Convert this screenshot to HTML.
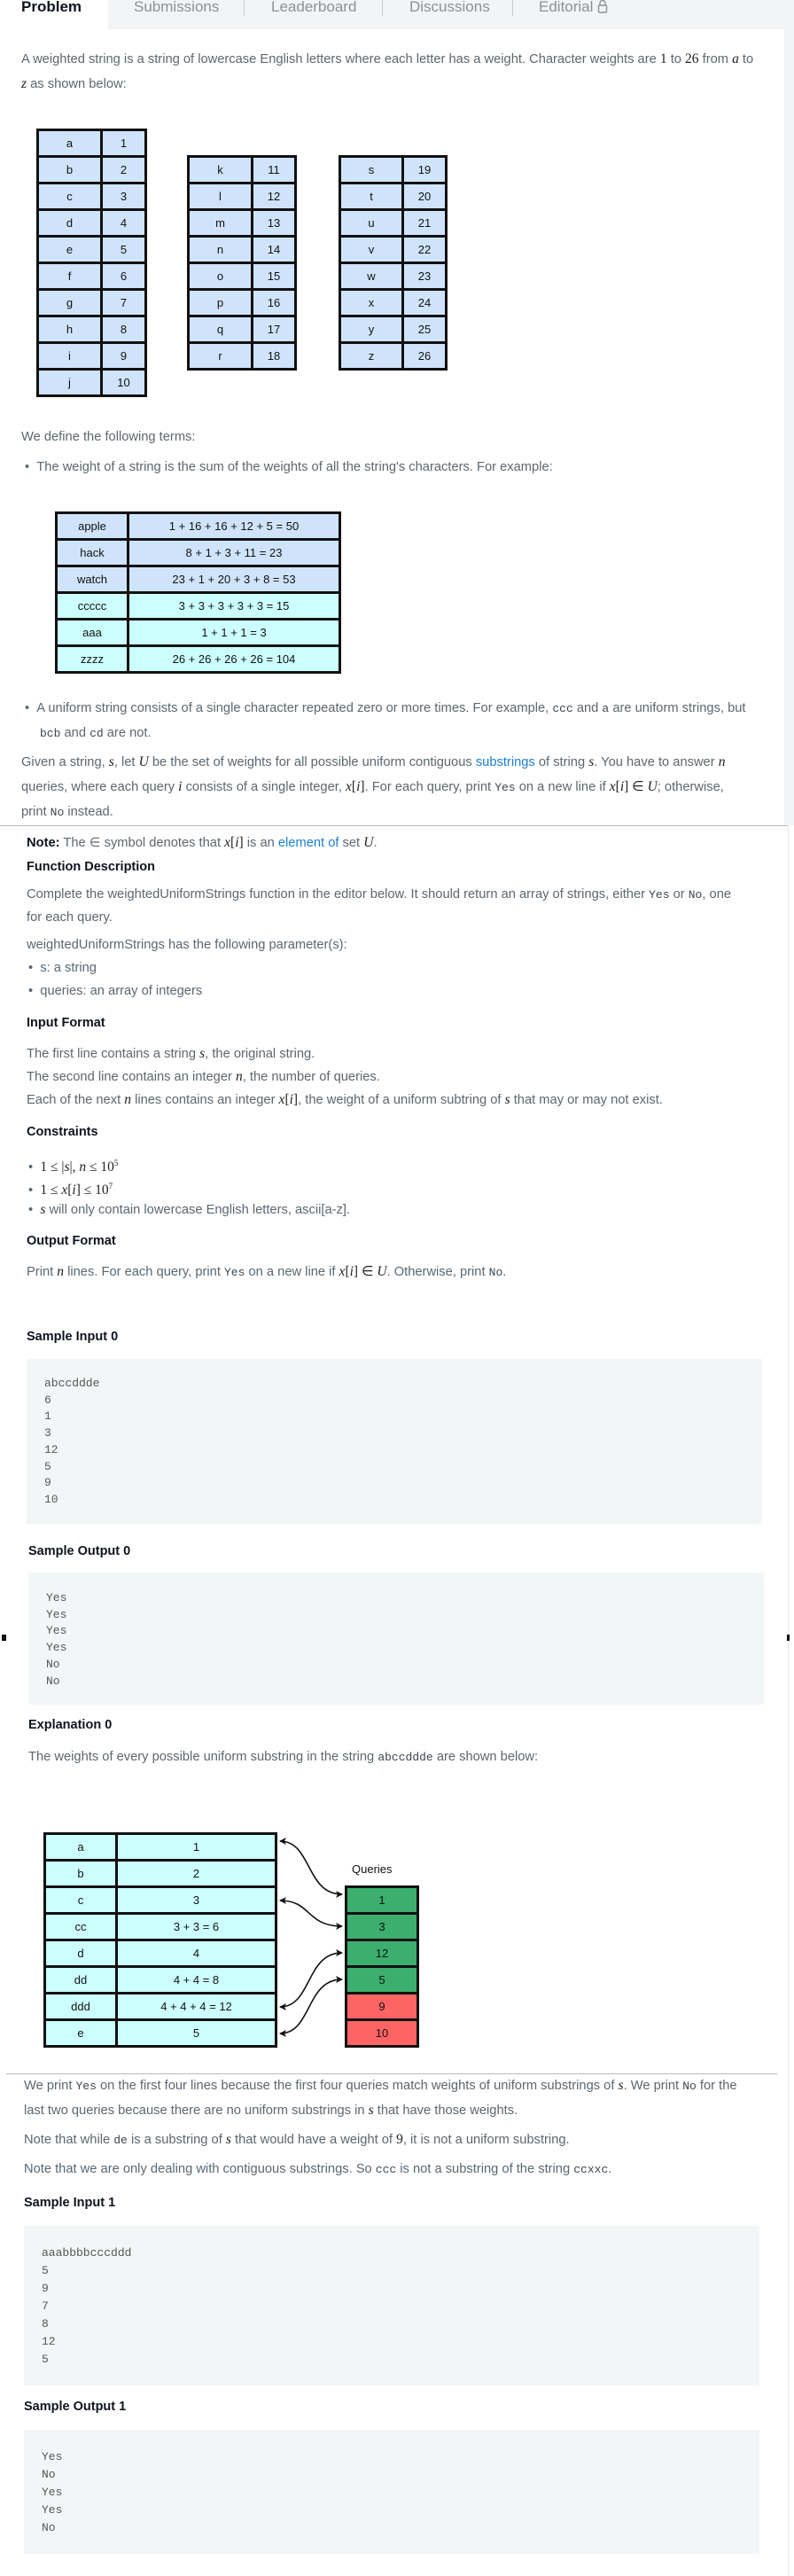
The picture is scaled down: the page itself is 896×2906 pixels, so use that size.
<!DOCTYPE html>
<html><head><meta charset="utf-8"><style>
*{margin:0;padding:0;box-sizing:border-box}
body{width:896px;height:2906px;position:relative;background:#fff;overflow:hidden;font-family:"Liberation Sans",sans-serif}
.t{position:absolute;white-space:nowrap;font-size:14.7px;line-height:20px;color:#5b6770}
.h{position:absolute;white-space:nowrap;font-size:14.5px;line-height:20px;color:#0e141e;font-weight:bold}
.m{font-family:"Liberation Serif",serif;font-style:italic;color:#222;font-size:15.5px}
.n{font-family:"Liberation Serif",serif;color:#222;font-size:15.5px}
.c{font-family:"Liberation Mono",monospace;font-size:13px;color:#3b4650}
a{color:#1b7fcc;text-decoration:none}
.tab{position:absolute;top:-3px;font-size:17px;color:#8a9299;line-height:22px}
.sep{position:absolute;top:0;width:1px;height:18px;background:#c8ced3}
table{position:absolute;border-collapse:collapse}
td{border:3px solid #111;text-align:center;font-size:13px;color:#111;padding:0;height:30px}
.b td{background:#cfe4fb}
.cy td{background:#ccffff}
.box{position:absolute;background:#f3f6f7}
.code{position:absolute;font-family:"Liberation Mono",monospace;font-size:13px;color:#555;white-space:pre}
</style></head><body>
<div style="position:absolute;left:122px;top:0;width:774px;height:33px;background:#f2f4f5"></div>
<div style="position:absolute;left:885px;top:33px;width:11px;height:898px;background:#f2f4f5"></div>
<div class="tab" style="left:24px;color:#0e141e;font-weight:bold;font-size:17px">Problem</div>
<div class="tab" style="left:151px">Submissions</div>
<div class="sep" style="left:275px"></div>
<div class="tab" style="left:306px">Leaderboard</div>
<div class="sep" style="left:431px"></div>
<div class="tab" style="left:462px">Discussions</div>
<div class="sep" style="left:578px"></div>
<div class="tab" style="left:608px">Editorial <svg width="12" height="16" viewBox="0 0 12 16" style="vertical-align:-2px"><path d="M3 7V4.5a3 3 0 0 1 6 0V7" fill="none" stroke="#8a9299" stroke-width="1.4"/><rect x="1.5" y="7" width="9" height="8" rx="1" fill="none" stroke="#8a9299" stroke-width="1.4"/></svg></div>

<div class="t" style="left:24px;top:57px">A weighted string is a string of lowercase English letters where each letter has a weight. Character weights are <span class="n">1</span> to <span class="n">26</span> from <span class="m">a</span> to</div>
<div class="t" style="left:24px;top:85px"><span class="m">z</span> as shown below:</div>

<table class="b" style="left:41px;top:145px;width:125px">
<tr><td style="width:72px">a</td><td>1</td></tr><tr><td>b</td><td>2</td></tr><tr><td>c</td><td>3</td></tr><tr><td>d</td><td>4</td></tr><tr><td>e</td><td>5</td></tr><tr><td>f</td><td>6</td></tr><tr><td>g</td><td>7</td></tr><tr><td>h</td><td>8</td></tr><tr><td>i</td><td>9</td></tr><tr><td>j</td><td>10</td></tr></table>
<table class="b" style="left:211px;top:175px;width:124px">
<tr><td style="width:72px">k</td><td>11</td></tr><tr><td>l</td><td>12</td></tr><tr><td>m</td><td>13</td></tr><tr><td>n</td><td>14</td></tr><tr><td>o</td><td>15</td></tr><tr><td>p</td><td>16</td></tr><tr><td>q</td><td>17</td></tr><tr><td>r</td><td>18</td></tr></table>
<table class="b" style="left:382px;top:175px;width:123px">
<tr><td style="width:71px">s</td><td>19</td></tr><tr><td>t</td><td>20</td></tr><tr><td>u</td><td>21</td></tr><tr><td>v</td><td>22</td></tr><tr><td>w</td><td>23</td></tr><tr><td>x</td><td>24</td></tr><tr><td>y</td><td>25</td></tr><tr><td>z</td><td>26</td></tr></table>

<div class="t" style="left:24px;top:483px">We define the following terms:</div>
<div class="t" style="left:28px;top:517px">•&nbsp;&nbsp;The weight of a string is the sum of the weights of all the string's characters. For example:</div>

<table style="left:62px;top:577px;width:323px">
<tr class="b"><td style="width:81px">apple</td><td>1 + 16 + 16 + 12 + 5 = 50</td></tr>
<tr class="b"><td>hack</td><td>8 + 1 + 3 + 11 = 23</td></tr>
<tr class="b"><td>watch</td><td>23 + 1 + 20 + 3 + 8 = 53</td></tr>
<tr class="cy"><td>ccccc</td><td>3 + 3 + 3 + 3 + 3 = 15</td></tr>
<tr class="cy"><td>aaa</td><td>1 + 1 + 1 = 3</td></tr>
<tr class="cy"><td>zzzz</td><td>26 + 26 + 26 + 26 = 104</td></tr></table>

<div class="t" style="left:28px;top:789px">•&nbsp;&nbsp;A uniform string consists of a single character repeated zero or more times. For example, <span class="c">ccc</span> and <span class="c">a</span> are uniform strings, but</div>
<div class="t" style="left:45px;top:817px"><span class="c">bcb</span> and <span class="c">cd</span> are not.</div>
<div class="t" style="left:24px;top:850px">Given a string, <span class="m">s</span>, let <span class="m">U</span> be the set of weights for all possible uniform contiguous <a>substrings</a> of string <span class="m">s</span>. You have to answer <span class="m">n</span></div>
<div class="t" style="left:24px;top:878px">queries, where each query <span class="m">i</span> consists of a single integer, <span class="m">x</span><span class="n">[</span><span class="m">i</span><span class="n">]</span>. For each query, print <span class="c">Yes</span> on a new line if <span class="m">x</span><span class="n">[</span><span class="m">i</span><span class="n">] ∈ </span><span class="m">U</span>; otherwise,</div>
<div class="t" style="left:24px;top:906px">print <span class="c">No</span> instead.</div>
<div style="position:absolute;left:0;top:931px;width:890px;height:1px;background:#bbb"></div>
<div style="position:absolute;left:889px;top:931px;width:1px;height:1975px;background:#e4e6e8"></div>

<div class="t" style="left:30px;top:941px"><b style="color:#0e141e">Note:</b> The ∈ symbol denotes that <span class="m">x</span><span class="n">[</span><span class="m">i</span><span class="n">]</span> is an <a>element of</a> set <span class="m">U</span>.</div>
<div class="h" style="left:30px;top:968px">Function Description</div>
<div class="t" style="left:30px;top:999px">Complete the weightedUniformStrings function in the editor below. It should return an array of strings, either <span class="c">Yes</span> or <span class="c">No</span>, one</div>
<div class="t" style="left:30px;top:1025px">for each query.</div>
<div class="t" style="left:30px;top:1056px">weightedUniformStrings has the following parameter(s):</div>
<div class="t" style="left:32px;top:1082px">•&nbsp;&nbsp;s: a string</div>
<div class="t" style="left:32px;top:1108px">•&nbsp;&nbsp;queries: an array of integers</div>
<div class="h" style="left:30px;top:1144px">Input Format</div>
<div class="t" style="left:30px;top:1179px">The first line contains a string <span class="m">s</span>, the original string.</div>
<div class="t" style="left:30px;top:1205px">The second line contains an integer <span class="m">n</span>, the number of queries.</div>
<div class="t" style="left:30px;top:1231px">Each of the next <span class="m">n</span> lines contains an integer <span class="m">x</span><span class="n">[</span><span class="m">i</span><span class="n">]</span>, the weight of a uniform subtring of <span class="m">s</span> that may or may not exist.</div>
<div class="h" style="left:30px;top:1267px">Constraints</div>
<div class="t" style="left:32px;top:1302px">•&nbsp;&nbsp;<span class="n">1 ≤ |</span><span class="m">s</span><span class="n">|, </span><span class="m">n</span><span class="n"> ≤ 10<sup style="font-size:9px">5</sup></span></div>
<div class="t" style="left:32px;top:1328px">•&nbsp;&nbsp;<span class="n">1 ≤ </span><span class="m">x</span><span class="n">[</span><span class="m">i</span><span class="n">] ≤ 10<sup style="font-size:9px">7</sup></span></div>
<div class="t" style="left:32px;top:1355px">•&nbsp;&nbsp;<span class="m">s</span> will only contain lowercase English letters, ascii[a-z].</div>
<div class="h" style="left:30px;top:1390px">Output Format</div>
<div class="t" style="left:30px;top:1425px">Print <span class="m">n</span> lines. For each query, print <span class="c">Yes</span> on a new line if <span class="m">x</span><span class="n">[</span><span class="m">i</span><span class="n">] ∈ </span><span class="m">U</span>. Otherwise, print <span class="c">No</span>.</div>

<div class="h" style="left:30px;top:1498px">Sample Input 0</div>
<div class="box" style="left:30px;top:1533px;width:830px;height:186px"></div>
<div class="code" style="left:50px;top:1552px;line-height:18.7px">abccddde
6
1
3
12
5
9
10</div>
<div class="h" style="left:32px;top:1740px">Sample Output 0</div>
<div class="box" style="left:32px;top:1774px;width:830px;height:149px"></div>
<div class="code" style="left:52px;top:1794px;line-height:18.7px">Yes
Yes
Yes
Yes
No
No</div>
<div style="position:absolute;left:2px;top:1844px;width:5px;height:7px;background:#111"></div>
<div style="position:absolute;left:888px;top:1844px;width:3px;height:7px;background:#111"></div>
<div class="h" style="left:32px;top:1936px">Explanation 0</div>
<div class="t" style="left:32px;top:1972px">The weights of every possible uniform substring in the string <span class="c">abccddde</span> are shown below:</div>

<table class="cy" style="left:49px;top:2067px;width:264px">
<tr><td style="width:81px">a</td><td>1</td></tr><tr><td>b</td><td>2</td></tr><tr><td>c</td><td>3</td></tr><tr><td>cc</td><td>3 + 3 = 6</td></tr><tr><td>d</td><td>4</td></tr><tr><td>dd</td><td>4 + 4 = 8</td></tr><tr><td>ddd</td><td>4 + 4 + 4 = 12</td></tr><tr><td>e</td><td>5</td></tr></table>
<div style="position:absolute;left:397px;top:2101px;font-size:13px;color:#111">Queries</div>
<table style="left:389px;top:2127px;width:84px">
<tr><td style="background:#3caf6e">1</td></tr><tr><td style="background:#3caf6e">3</td></tr><tr><td style="background:#3caf6e">12</td></tr><tr><td style="background:#3caf6e">5</td></tr><tr><td style="background:#ff6464">9</td></tr><tr><td style="background:#ff6464">10</td></tr></table>
<svg style="position:absolute;left:0;top:0" width="896" height="2906">
<defs><marker id="ar" markerWidth="8" markerHeight="8" refX="7" refY="4" orient="auto-start-reverse" markerUnits="userSpaceOnUse"><path d="M0,0 L8,4 L0,8 L2,4 Z" fill="#111"/></marker></defs>
<g fill="none" stroke="#111" stroke-width="1.6" marker-start="url(#ar)" marker-end="url(#ar)">
<path d="M316,2077 C352,2077 345,2137 386,2137"/>
<path d="M316,2144 C352,2144 345,2173 386,2173"/>
<path d="M316,2264 C352,2264 345,2203 386,2203"/>
<path d="M316,2294 C352,2294 345,2233 386,2233"/>
</g></svg>

<div style="position:absolute;left:7px;top:2339px;width:870px;height:1px;background:#bbb"></div>
<div class="t" style="left:27px;top:2343px">We print <span class="c">Yes</span> on the first four lines because the first four queries match weights of uniform substrings of <span class="m">s</span>. We print <span class="c">No</span> for the</div>
<div class="t" style="left:27px;top:2371px">last two queries because there are no uniform substrings in <span class="m">s</span> that have those weights.</div>
<div class="t" style="left:27px;top:2404px">Note that while <span class="c">de</span> is a substring of <span class="m">s</span> that would have a weight of <span class="n">9</span>, it is not a uniform substring.</div>
<div class="t" style="left:27px;top:2437px">Note that we are only dealing with contiguous substrings. So <span class="c">ccc</span> is not a substring of the string <span class="c">ccxxc</span>.</div>
<div class="h" style="left:27px;top:2475px">Sample Input 1</div>
<div class="box" style="left:27px;top:2511px;width:830px;height:180px"></div>
<div class="code" style="left:47px;top:2532px;line-height:20px">aaabbbbcccddd
5
9
7
8
12
5</div>
<div class="h" style="left:27px;top:2705px">Sample Output 1</div>
<div class="box" style="left:27px;top:2741px;width:830px;height:140px"></div>
<div class="code" style="left:47px;top:2762px;line-height:20px">Yes
No
Yes
Yes
No</div>
</body></html>
